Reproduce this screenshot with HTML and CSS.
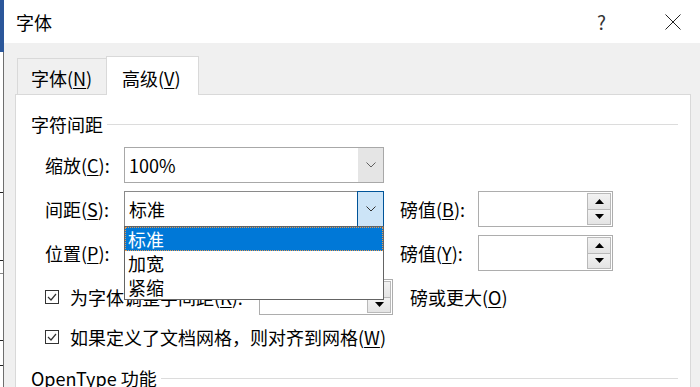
FILE: index.html
```html
<!DOCTYPE html>
<html lang="zh-CN">
<head>
    <meta charset="UTF-8">
    <meta name="viewport" content="width=device-width, initial-scale=1.0">
    <title>字体</title>
    <link rel="stylesheet" href="styles.css">
</head>
<body>
    <div class="screen">
        <div class="backdrop"></div>
        <div class="dialog">
            <div class="titlebar">
                <span class="title">字体</span>
                <span class="help">?</span>
                <svg class="close" width="16" height="16" viewBox="0 0 16 16">
                    <path d="M0.5 0.5 L15.5 15.5 M15.5 0.5 L0.5 15.5" stroke="#222" stroke-width="1" fill="none"/>
                </svg>
            </div>
            <div class="body">
                <div class="tabs">
                    <div class="tab">字体(<u>N</u>)</div>
                    <div class="tab active">高级(<u>V</u>)</div>
                </div>
                <div class="panel">
                    <div class="group-title">字符间距</div>
                    <div class="fields">
                        <div class="form">
                            <span class="lbl">缩放(<u>C</u>):</span>
                            <div class="combo">
                                <span class="value">100%</span>
                                <span class="drop">
                                    <svg width="10" height="6" viewBox="0 0 10 6"><polyline points="0.5,0.5 5,5 9.5,0.5" fill="none" stroke="#606060" stroke-width="1"/></svg>
                                </span>
                            </div>

                            <span class="lbl">间距(<u>S</u>):</span>
                            <div class="combo focus">
                                <span class="value">标准</span>
                                <span class="drop">
                                    <svg width="10" height="6" viewBox="0 0 10 6"><polyline points="0.5,0.5 5,5 9.5,0.5" fill="none" stroke="#333" stroke-width="1"/></svg>
                                </span>
                                <ul class="list">
                                    <li class="selected">标准</li>
                                    <li>加宽</li>
                                    <li>紧缩</li>
                                </ul>
                            </div>
                            <span class="lbl right">磅值(<u>B</u>):</span>
                            <div class="spin">
                                <span class="spin-btns">
                                    <span class="btn"><svg width="9" height="5" viewBox="0 0 9 5"><polygon points="4.5,0 9,5 0,5" fill="#000"/></svg></span>
                                    <span class="btn"><svg width="9" height="5" viewBox="0 0 9 5"><polygon points="0,0 9,0 4.5,5" fill="#000"/></svg></span>
                                </span>
                            </div>

                            <span class="lbl">位置(<u>P</u>):</span>
                            <div class="combo">
                                <span class="value">标准</span>
                                <span class="drop">
                                    <svg width="10" height="6" viewBox="0 0 10 6"><polyline points="0.5,0.5 5,5 9.5,0.5" fill="none" stroke="#606060" stroke-width="1"/></svg>
                                </span>
                            </div>
                            <span class="lbl right">磅值(<u>Y</u>):</span>
                            <div class="spin">
                                <span class="spin-btns">
                                    <span class="btn"><svg width="9" height="5" viewBox="0 0 9 5"><polygon points="4.5,0 9,5 0,5" fill="#000"/></svg></span>
                                    <span class="btn"><svg width="9" height="5" viewBox="0 0 9 5"><polygon points="0,0 9,0 4.5,5" fill="#000"/></svg></span>
                                </span>
                            </div>
                        </div>

                        <div class="check-row kern">
                            <span class="check">
                                <svg class="box" width="14" height="14" viewBox="0 0 14 14"><rect x="0.5" y="0.5" width="13" height="13" fill="#fff" stroke="#333"/><polyline points="3,7 6,10 11,4" fill="none" stroke="#333" stroke-width="1.2"/></svg>
                                <span>为字体调整字间距(<u>K</u>):</span>
                            </span>
                            <div class="spin">
                                <span class="spin-btns">
                                    <span class="btn"><svg width="9" height="5" viewBox="0 0 9 5"><polygon points="4.5,0 9,5 0,5" fill="#000"/></svg></span>
                                    <span class="btn"><svg width="9" height="5" viewBox="0 0 9 5"><polygon points="0,0 9,0 4.5,5" fill="#000"/></svg></span>
                                </span>
                            </div>
                            <span class="after">磅或更大(<u>O</u>)</span>
                        </div>

                        <div class="check-row grid-snap">
                            <span class="check">
                                <svg class="box" width="14" height="14" viewBox="0 0 14 14"><rect x="0.5" y="0.5" width="13" height="13" fill="#fff" stroke="#333"/><polyline points="3,7 6,10 11,4" fill="none" stroke="#333" stroke-width="1.2"/></svg>
                                <span>如果定义了文档网格，则对齐到网格(<u>W</u>)</span>
                            </span>
                        </div>
                    </div>
                    <div class="group-title opentype">OpenType 功能</div>
                </div>
            </div>
        </div>
    </div>
</body>
</html>
```

FILE: styles.css
```css
body {
    margin: 0;
    padding: 0;
    font-family: "Noto Sans CJK SC", "Liberation Sans", sans-serif;
    font-size: 18px;
    color: #000;
    background: #fff;
}
u {
    text-decoration-thickness: 1px;
    text-underline-offset: 2px;
}
.screen {
    display: flex;
    width: 700px;
    height: 387px;
    overflow: hidden;
}
.backdrop {
    width: 4px;
    flex: none;
    background:
        linear-gradient(#2b579a, #2b579a) 0 0 / 4px 52px no-repeat,
        linear-gradient(#222, #222) 0 192px / 3px 1px no-repeat,
        linear-gradient(#222, #222) 0 260px / 3px 1px no-repeat,
        linear-gradient(#888, #888) 0 273px / 3px 1px no-repeat,
        linear-gradient(#222, #222) 0 340px / 3px 1px no-repeat,
        linear-gradient(#222, #222) 0 365px / 3px 1px no-repeat,
        linear-gradient(to right, #fff 3px, #6e6e6e 3px) 0 0 / 4px 100% no-repeat;
}
.dialog {
    flex: 1;
    display: flex;
    flex-direction: column;
    background: #f0f0f0;
}
.titlebar {
    height: 43px;
    flex: none;
    background: #fff;
    display: flex;
    align-items: center;
    padding: 0 19px 0 12px;
}
.title {
    flex: 1;
    line-height: 24px;
    margin-top: 1px;
}
.help {
    font-size: 19px;
    color: #333;
    line-height: 24px;
    margin-right: 59px;
    margin-top: 1px;
}
.close {
    display: block;
    margin-top: 1px;
}
.body {
    flex: 1;
    display: flex;
    flex-direction: column;
    padding: 13px 9px 0 11px;
}
.tabs {
    display: flex;
    align-items: flex-end;
    padding-left: 2px;
}
.tab {
    box-sizing: border-box;
    width: 89px;
    height: 36px;
    padding: 7px 0 0 13px;
    line-height: 24px;
    border-top: 1px solid #d9d9d9;
    border-left: 1px solid #d9d9d9;
    white-space: nowrap;
}
.tab.active {
    width: 93px;
    height: 39px;
    padding: 9px 0 0 15px;
    margin-bottom: -1px;
    border-right: 1px solid #d9d9d9;
    background: #fff;
    position: relative;
    z-index: 1;
}
.panel {
    flex: 1;
    background: #fff;
    border: 1px solid #d9d9d9;
    padding: 0 12px 0 15px;
}
.group-title {
    display: flex;
    align-items: center;
    gap: 4px;
    margin-top: 17px;
    line-height: 24px;
    white-space: nowrap;
}
.group-title::after {
    content: "";
    flex: 1;
    height: 1px;
    background: #dcdcdc;
}
.fields {
    padding-left: 14px;
    margin-top: 11px;
}
.form {
    display: grid;
    grid-template-columns: 79px 260px 94px 135px;
    grid-auto-rows: 36px;
    row-gap: 8px;
}
.lbl {
    grid-column: 1;
    align-self: center;
    line-height: 24px;
    white-space: nowrap;
}
.lbl.right {
    grid-column: 3;
    padding-left: 16px;
}
.combo {
    position: relative;
    display: flex;
    box-sizing: border-box;
    border: 1px solid #a8a8a8;
    background: #fff;
}
.combo .value {
    flex: 1;
    padding-left: 4px;
    line-height: 34px;
}
.combo .drop {
    width: 25px;
    display: flex;
    align-items: center;
    justify-content: center;
    background: #e5e5e5;
}
.combo.focus {
    border-color: #8a8a8a;
    z-index: 5;
}
.combo.focus .drop {
    background: #cce4f7;
    margin: -1px -1px -1px 0;
    border: 1px solid #005499;
}
.list {
    position: absolute;
    top: 100%;
    left: -1px;
    right: -1px;
    margin: 0;
    padding: 0;
    list-style: none;
    background: #fff;
    border: 1px solid #646464;
}
.list li {
    height: 24px;
    line-height: 24px;
    padding-left: 3px;
}
.list li.selected {
    background: #0078d7;
    color: #fff;
    outline: 1px dotted #e89a50;
    outline-offset: -1px;
}
.spin {
    box-sizing: border-box;
    height: 36px;
    border: 1px solid #adadad;
    background: #fff;
    display: flex;
    justify-content: flex-end;
    padding: 1px;
}
.spin-btns {
    display: flex;
    flex-direction: column;
    width: 24px;
}
.spin-btns .btn {
    flex: 1;
    display: flex;
    align-items: center;
    justify-content: center;
    box-sizing: border-box;
    border: 1px solid #b9b9b9;
    background: linear-gradient(#f2f2f2, #e4e4e4);
}
.spin-btns .btn + .btn {
    border-top: none;
}
.check {
    display: flex;
    align-items: center;
    gap: 11px;
    line-height: 24px;
    white-space: nowrap;
}
.check .box {
    display: block;
    flex: none;
}
.check-row {
    display: grid;
    align-items: center;
}
.check-row.kern {
    grid-template-columns: 214px 134px auto;
    height: 36px;
    margin-top: 8px;
}
.check-row.kern .after {
    padding-left: 17px;
    line-height: 24px;
}
.check-row.grid-snap {
    height: 24px;
    margin-top: 10px;
}
.group-title.opentype {
    margin-top: 17px;
}
```
